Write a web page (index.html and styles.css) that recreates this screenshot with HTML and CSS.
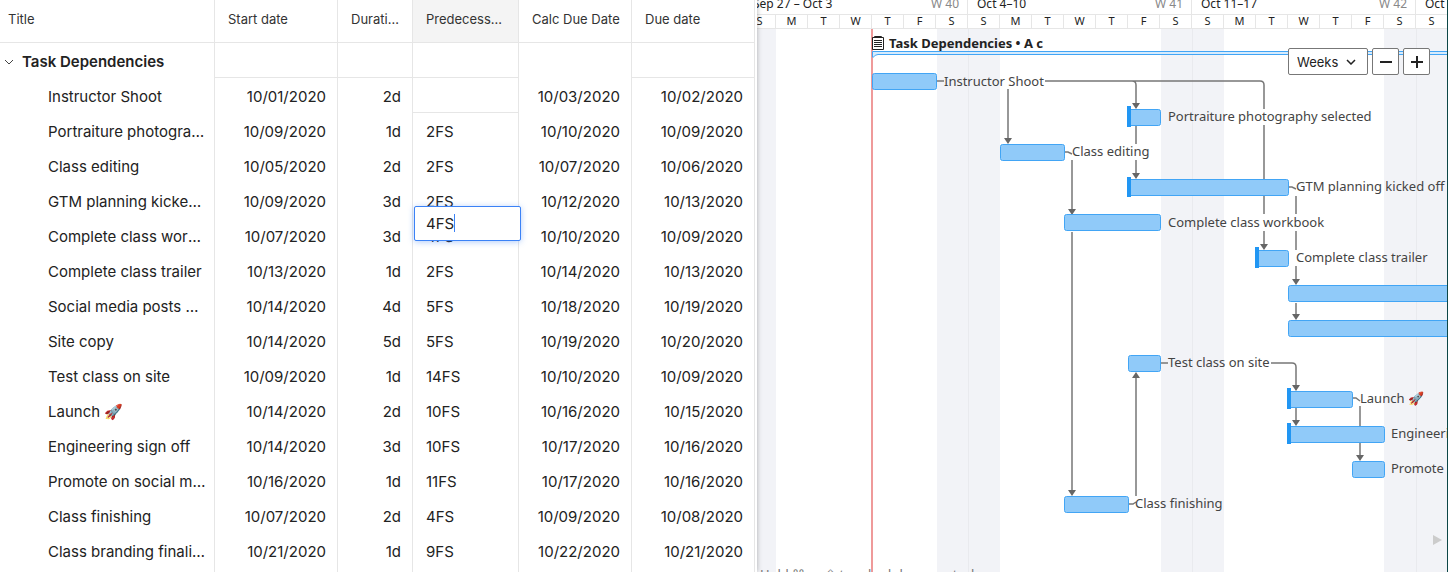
FILE: index.html
```
<!DOCTYPE html>
<html lang="en">
<head>
<meta charset="UTF-8" />
<meta name="viewport" content="width=device-width, initial-scale=1" />
<title>Task Dependencies</title>
<link rel="stylesheet" href="styles.css">
</head>
<body>

<main class="app">

  <!-- Task table -->
  <section class="sheet">
    <table class="tasks">
      <colgroup>
        <col class="col-title"><col class="col-start"><col class="col-duration">
        <col class="col-pred"><col class="col-calc"><col class="col-due">
      </colgroup>
      <thead>
        <tr><th>Title</th><th>Start date</th><th>Duration</th><th class="active">Predecessors</th><th>Calc Due Date</th><th>Due date</th></tr>
      </thead>
      <tbody>
        <tr class="group">
          <td>
            <button class="toggle" aria-label="Collapse group">
              <svg width="10" height="6" viewBox="0 0 10 6"><path d="M1 1l4 4 4-4" /></svg>
              Task Dependencies
            </button>
          </td>
          <td></td><td></td><td></td><td class="open"></td><td></td>
        </tr>
        <tr><td>Instructor Shoot</td><td>10/01/2020</td><td>2d</td><td class="empty"></td><td>10/03/2020</td><td>10/02/2020</td></tr>
        <tr><td>Portraiture photography selected</td><td>10/09/2020</td><td>1d</td><td>2FS</td><td>10/10/2020</td><td>10/09/2020</td></tr>
        <tr><td>Class editing</td><td>10/05/2020</td><td>2d</td><td>2FS</td><td>10/07/2020</td><td>10/06/2020</td></tr>
        <tr><td>GTM planning kicked off</td><td>10/09/2020</td><td>3d</td><td>2FS</td><td>10/12/2020</td><td>10/13/2020</td></tr>
        <tr>
          <td>Complete class workbook</td><td>10/07/2020</td><td>3d</td>
          <td class="editing">4FS
            <div class="editor"><input type="text" value="4FS" aria-label="Predecessors"><span class="caret"></span></div>
          </td>
          <td>10/10/2020</td><td>10/09/2020</td>
        </tr>
        <tr><td>Complete class trailer</td><td>10/13/2020</td><td>1d</td><td>2FS</td><td>10/14/2020</td><td>10/13/2020</td></tr>
        <tr><td>Social media posts drafted</td><td>10/14/2020</td><td>4d</td><td>5FS</td><td>10/18/2020</td><td>10/19/2020</td></tr>
        <tr><td>Site copy</td><td>10/14/2020</td><td>5d</td><td>5FS</td><td>10/19/2020</td><td>10/20/2020</td></tr>
        <tr><td>Test class on site</td><td>10/09/2020</td><td>1d</td><td>14FS</td><td>10/10/2020</td><td>10/09/2020</td></tr>
        <tr><td>Launch 🚀</td><td>10/14/2020</td><td>2d</td><td>10FS</td><td>10/16/2020</td><td>10/15/2020</td></tr>
        <tr><td>Engineering sign off</td><td>10/14/2020</td><td>3d</td><td>10FS</td><td>10/17/2020</td><td>10/16/2020</td></tr>
        <tr><td>Promote on social media</td><td>10/16/2020</td><td>1d</td><td>11FS</td><td>10/17/2020</td><td>10/16/2020</td></tr>
        <tr><td>Class finishing</td><td>10/07/2020</td><td>2d</td><td>4FS</td><td>10/09/2020</td><td>10/08/2020</td></tr>
        <tr><td>Class branding finalized</td><td>10/21/2020</td><td>1d</td><td>9FS</td><td>10/22/2020</td><td>10/21/2020</td></tr>
        <tr><td></td><td></td><td></td><td></td><td></td><td></td></tr>
      </tbody>
    </table>
  </section>

  <!-- Timeline -->
  <section class="gantt">
    <div class="timeline">
      <div class="weeks">
        <div class="week"><span>Sep 27 – Oct 3</span><span class="num">W 40</span></div>
        <div class="week"><span>Oct 4–10</span><span class="num">W 41</span></div>
        <div class="week"><span>Oct 11–17</span><span class="num">W 42</span></div>
        <div class="week"><span>Oct 18–24</span><span class="num">W 43</span></div>
      </div>
      <div class="days">
        <span>S</span><span>M</span><span>T</span><span>W</span><span>T</span><span>F</span><span>S</span>
        <span>S</span><span>M</span><span>T</span><span>W</span><span>T</span><span>F</span><span>S</span>
        <span>S</span><span>M</span><span>T</span><span>W</span><span>T</span><span>F</span><span>S</span>
        <span>S</span>
      </div>

      <!-- one day is 32 units wide -->
      <svg class="chart" width="704" height="543" viewBox="0 0 704 543">
        <g class="weekend">
          <rect x="0" y="0" width="32" height="543" />
          <rect x="193" y="0" width="63" height="543" />
          <rect x="417" y="0" width="63" height="543" />
          <rect x="640" y="0" width="64" height="543" />
        </g>
        <g class="week-line">
          <rect x="224" y="0" width="1" height="543" />
          <rect x="448" y="0" width="1" height="543" />
          <rect x="672" y="0" width="1" height="543" />
        </g>
        <rect class="today" x="127" y="0" width="2" height="543" />

        <g class="links">
          <path d="M193 52h7M301 52h87q4 0 4 4v19M388 52h128q4 0 4 4v24M520 96v54M520 167v18M520 202v14" />
          <path d="M264 60v50M392 97v18M392 131v15" />
          <path d="M321 123h3l4 2M328 131v50M328 203v261" />
          <path d="M545 158h3l4 2M552 167v18M552 202v19M552 237v16M552 274v14" />
          <path d="M417 334h7M527 334h21q4 0 4 4v20M552 379v14" />
          <path d="M609 369h3l4 3M616 377v20M616 414v14" />
          <path d="M385 475h4l3-2M392 467V346" />
        </g>
        <g class="arrows">
          <path d="M388 74h8l-4 6z" /><path d="M388 144h8l-4 6z" />
          <path d="M260 109h8l-4 6z" /><path d="M324 180h8l-4 6z" />
          <path d="M324 461h8l-4 6z" /><path d="M516 215h8l-4 6z" />
          <path d="M548 250h8l-4 6z" /><path d="M548 285h8l-4 6z" />
          <path d="M548 356h8l-4 6z" /><path d="M548 391h8l-4 6z" />
          <path d="M612 426h8l-4 6z" /><path d="M388 349h8l-4-6z" />
        </g>

        <!-- group summary -->
        <g class="summary">
          <path d="M128.500 28v-5.500H706v3H134q-3 0-5 3z" />
        </g>
        <g class="clipboard">
          <path d="M128.500 8.500h11v12h-11z" />
          <path d="M130.500 8.500v-1h7v1M130 11.500h8M130 13.500h8M130 15.500h8M130 17.500h8" />
        </g>
        <text class="group-label" x="145" y="19">Task Dependencies • A c</text>

        <g class="bars" transform="translate(.5 .5)">
          <rect x="128" y="44" width="64" height="16" rx="2" />
          <rect x="384" y="80" width="32" height="16" rx="2" />
          <rect x="256" y="115" width="64" height="16" rx="2" />
          <rect x="384" y="150" width="160" height="16" rx="2" />
          <rect x="320" y="185" width="96" height="16" rx="2" />
          <rect x="512" y="221" width="32" height="16" rx="2" />
          <rect x="544" y="256" width="192" height="16" rx="2" />
          <rect x="544" y="291" width="192" height="16" rx="2" />
          <rect x="384" y="326" width="32" height="16" rx="2" />
          <rect x="544" y="362" width="64" height="16" rx="2" />
          <rect x="544" y="397" width="96" height="16" rx="2" />
          <rect x="608" y="432" width="32" height="16" rx="2" />
          <rect x="320" y="467" width="64" height="16" rx="2" />
        </g>
        <g class="constraints">
          <rect x="383" y="77" width="4" height="21" />
          <rect x="383" y="148" width="4" height="20" />
          <rect x="511" y="218" width="4" height="21" />
          <rect x="543" y="359" width="4" height="21" />
          <rect x="543" y="394" width="4" height="21" />
        </g>

        <g class="labels">
          <text x="200" y="57">Instructor Shoot</text>
          <text x="424" y="92">Portraiture photography selected</text>
          <text x="328" y="127">Class editing</text>
          <text x="552" y="162">GTM planning kicked off</text>
          <text x="424" y="198">Complete class workbook</text>
          <text x="552" y="233">Complete class trailer</text>
          <text x="424" y="338">Test class on site</text>
          <text x="616" y="374">Launch 🚀</text>
          <text x="647" y="409">Engineering sign off</text>
          <text x="647" y="444">Promote on social media</text>
          <text x="391" y="479">Class finishing</text>
        </g>
        <path class="more" d="M689 506l9 5-9 5z" />
      </svg>
    </div>

    <div class="controls">
      <label class="scale">
        <select aria-label="Time scale"><option>Weeks</option><option>Months</option></select>
        <svg width="10" height="6" viewBox="0 0 10 6"><path d="M1 1l4 4 4-4" /></svg>
      </label>
      <button aria-label="Zoom out"><svg width="14" height="14" viewBox="0 0 14 14"><path d="M1 7h12" /></svg></button>
      <button aria-label="Zoom in"><svg width="14" height="14" viewBox="0 0 14 14"><path d="M1 7h12M7 1v12" /></svg></button>
    </div>
    <p class="hint">Hold ⌘ or ⇧ to schedule a new task</p>
  </section>

</main>

</body>
</html>
```
FILE: styles.css
```
* {
  margin: 0; padding: 0; box-sizing: border-box;
}
body {
  font-family: Inter, "Liberation Sans", sans-serif;
  color: #222;
  background: #fff;
  overflow: hidden;
}
button, input, select {
  font: inherit;
  color: inherit;
}
svg {
  display: block;
}

.app {
  display: flex;
  height: 100vh;
  overflow: hidden;
}

/* --- Task table --- */
.sheet {
  flex: none;
  position: relative;
  z-index: 1;
  padding-right: 2px;
  background: #fff;
  box-shadow: 0 0 5px rgba(0,0,0,0.3);
}
.tasks {
  width: 755px;
  table-layout: fixed;
  border-collapse: separate;
  border-spacing: 0;
}
.col-title { width: 215px; }
.col-start, .col-due { width: 123px; }
.col-duration { width: 75px; }
.col-pred { width: 106px; }
.col-calc { width: 113px; }

th, td {
  border-right: 1px solid #e6e6e6;
  white-space: nowrap;
  overflow: hidden;
  text-overflow: ellipsis;
}
th {
  height: 43px;
  padding: 0 12px 4px 13px;
  border-bottom: 1px solid #e6e6e6;
  font-size: 13px;
  font-weight: 400;
  text-align: left;
  color: #333;
}
th:first-child {
  padding-left: 8px;
}
th:nth-child(5) {
  padding-right: 4px;
}
th.active {
  background: #f4f4f4;
}
td {
  height: 35px;
  padding: 2px 11px 0 13px;
  font-size: 15px;
  line-height: 20px;
  text-align: right;
}
td:first-child {
  padding-left: 48px;
  padding-right: 8px;
  text-align: left;
}
td:nth-child(4) {
  text-align: left;
}
.group td, td.empty {
  border-bottom: 1px solid #e6e6e6;
}
.group td:first-child, .group td.open {
  border-bottom: 0;
}
.group td:first-child {
  padding-left: 4px;
}
.toggle {
  display: flex;
  align-items: center;
  gap: 8px;
  border: 0;
  background: none;
  font-weight: 600;
}
.toggle path {
  fill: none;
  stroke: #444;
}

/* --- Cell editor --- */
td.editing {
  position: relative;
  overflow: visible;
}
.editor {
  position: absolute;
  top: -12px; left: 1px;
  width: 107px;
  height: 35px;
  z-index: 2;
}
.editor input {
  width: 100%;
  height: 100%;
  padding: 0 11px;
  border: 1px solid #3b82f6;
  border-radius: 2px;
  outline: none;
  background: #fff;
  box-shadow: 0 1px 6px rgba(59,130,246,0.4);
  caret-color: transparent;
}
.caret {
  position: absolute;
  top: 8px; left: 40px;
  width: 1px;
  height: 18px;
  background: #3b82f6;
}

/* --- Gantt --- */
.gantt {
  flex: 1;
  min-width: 0;
  position: relative;
  overflow: hidden;
  border-right: 1px solid #0d4747;
  font-family: "Noto Sans", "Open Sans", sans-serif;
  font-size: 13px;
}
.timeline {
  width: 704px;
  margin-left: -13px;
}
.weeks, .days {
  display: flex;
  overflow: hidden;
}
.weeks {
  height: 15px;
  align-items: flex-end;
  border-bottom: 1px solid #e6e6e6;
}
.week {
  flex: none;
  display: flex;
  justify-content: space-between;
  width: 224px;
  padding: 0 8px 0 9px;
  border-right: 1px solid #e6e6e6;
  font-size: 12px;
  line-height: 20px;
}
.week .num {
  color: #888;
}
.days {
  height: 14px;
  border-bottom: 1px solid #e6e6e6;
}
.days span {
  flex: none;
  width: 32px;
  border-right: 1px solid #e6e6e6;
  font-size: 11px;
  line-height: 12px;
  text-align: center;
}

.weekend { fill: #f2f3f7; }
.week-line { fill: #e9eaee; }
.today { fill: #ef9a9a; }
.links {
  fill: none;
  stroke: #777;
  stroke-width: 1.5;
}
.arrows { fill: #666; }
.summary {
  fill: #d6ebfd;
  stroke: #42a5f5;
}
.clipboard {
  fill: none;
  stroke: #222;
}
.bars {
  fill: #90caf9;
  stroke: #42a5f5;
}
.constraints { fill: #2196f3; }
.labels { fill: #444; }
.group-label {
  fill: #222;
  font-weight: 700;
}
.more { fill: #ccc; }

/* --- Zoom controls --- */
.controls {
  position: absolute;
  top: 48px; right: 17px;
  display: flex;
  gap: 4px;
  font-family: Inter, "Liberation Sans", sans-serif;
}
.scale {
  position: relative;
}
.scale select, .controls button {
  height: 27px;
  border: 1px solid #777;
  border-radius: 2px;
  background: #fff;
}
.scale select {
  appearance: none;
  width: 80px;
  padding: 0 8px;
}
.scale svg {
  position: absolute;
  top: 11px; right: 12px;
  pointer-events: none;
}
.controls button {
  display: grid;
  place-items: center;
  width: 27px;
}
.controls path {
  fill: none;
  stroke: #222;
  stroke-width: 2;
}
.controls .scale path {
  stroke-width: 1.5;
}

.hint {
  position: absolute;
  bottom: -12px; left: 3px;
  line-height: 20px;
  color: #777;
}
```
